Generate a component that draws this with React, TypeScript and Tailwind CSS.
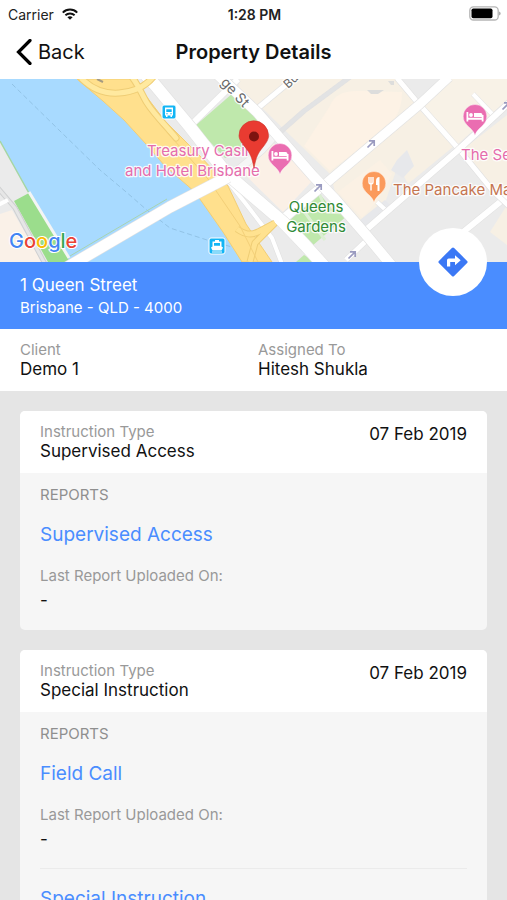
import type { ReactNode } from "react";

type Report = { name: string; lastUploaded: string };
type Instruction = { type: string; date: string; reports: Report[] };

const instructions: Instruction[] = [
  {
    type: "Supervised Access",
    date: "07 Feb 2019",
    reports: [{ name: "Supervised Access", lastUploaded: "-" }],
  },
  {
    type: "Special Instruction",
    date: "07 Feb 2019",
    reports: [
      { name: "Field Call", lastUploaded: "-" },
      { name: "Special Instruction", lastUploaded: "-" },
    ],
  },
];

function WifiIcon() {
  return (
    <svg className="h-3 w-4" viewBox="0 0 16 12" fill="none" stroke="#111" aria-hidden="true">
      <path d="M0.8 4.6C4.8 0.6 11.2 0.6 15.2 4.6" strokeWidth="2" />
      <path d="M3.4 7.3C6 4.8 10 4.8 12.6 7.3" strokeWidth="1.9" />
      <path d="M8 11.8L5.4 9.2C6.9 7.9 9.1 7.9 10.6 9.2Z" fill="#111" stroke="none" />
    </svg>
  );
}

function BatteryIcon() {
  return (
    <svg className="h-4 w-8" viewBox="0 0 32 16" aria-hidden="true">
      <rect x="0.8" y="0.8" width="28.4" height="13.2" rx="3.6" fill="#fff" stroke="#b5b5b5" strokeWidth="1.3" />
      <rect x="2.5" y="2.5" width="21" height="9.8" rx="1.8" fill="#000" />
      <path d="M30.3 5.5v4c1.6-.6 1.6-3.4 0-4z" fill="#8a8a8a" />
    </svg>
  );
}

function StatusBar() {
  return (
    <div className="grid h-7 grid-cols-3 items-center pl-2 pr-1.5 text-[14px] text-[#222]">
      <div className="flex items-center gap-2">
        <span>Carrier</span>
        <WifiIcon />
      </div>
      <span className="text-center font-semibold">1:28 PM</span>
      <div className="flex justify-end">
        <BatteryIcon />
      </div>
    </div>
  );
}

function NavBar() {
  return (
    <header className="grid h-[51px] grid-cols-[1fr_auto_1fr] items-center px-4 pb-1">
      <button type="button" className="flex items-center gap-1.5 justify-self-start text-[20px] text-[#111]">
        <svg className="h-[26px] w-4" viewBox="0 0 16 26" fill="none" stroke="#000" strokeWidth="3.2" aria-hidden="true">
          <path d="M14 1.5L2.500 13L14 24.500" strokeLinecap="round" strokeLinejoin="miter" />
        </svg>
        Back
      </button>
      <h1 className="text-[20px] font-semibold text-[#111]">Property Details</h1>
    </header>
  );
}

function Road({ d, width, color = "#fff" }: { d: string; width: number; color?: string }) {
  return (
    <g fill="none" strokeLinejoin="round">
      <path d={d} stroke="#e2e2e2" strokeWidth={width + 1.2} />
      <path d={d} stroke={color} strokeWidth={width} />
    </g>
  );
}

function PlacePin({ x, y, color, children }: { x: number; y: number; color: string; children: ReactNode }) {
  return (
    <g transform={`translate(${x} ${y})`}>
      <path
        d="M0 18.500C-1.500 13-5 11.500-8.500 7.500A11.800 11.800 0 1 1 8.500 7.500C5 11.500 1.500 13 0 18.500Z"
        fill={color}
        stroke="#fff"
        strokeOpacity="0.5"
        strokeWidth="0.8"
      />
      {children}
    </g>
  );
}

function Bed() {
  return (
    <g fill="#fff">
      <path d="M-8.500-5H-6.700V0.800H6.700V-2H8.500V4.500H6.700V2.800H-6.700V4.500H-8.500Z" />
      <circle cx="-4" cy="-2" r="1.900" />
      <path d="M-1-4H5.500Q7.500-4 7.500-2V0H-1Z" />
    </g>
  );
}

function Arrow({ x, y }: { x: number; y: number }) {
  return (
    <path
      transform={`translate(${x} ${y})`}
      d="M-3.500 3.500L2.500-2.500M-2-3.200H3.200V2"
      fill="none"
      stroke="#9a9bc0"
      strokeWidth="1.700"
    />
  );
}

function TransitStop({ x, y, ferry = false }: { x: number; y: number; ferry?: boolean }) {
  return (
    <g transform={`translate(${x} ${y})`}>
      {ferry ? (
        <>
          <rect x="-8" y="-8" width="16" height="16" rx="2" fill="#12b5f5" stroke="#fff" strokeWidth="1" />
          <path d="M-2-6H2V-4.500H4.500V0.500L6 1.500L4.500 4.500H-4.500L-6 1.500L-4.500 0.500V-4.500H-2ZM-3-3V-0.300H3V-3ZM-5 5.500H5V6.500H-5Z" fill="#fff" fillRule="evenodd" />
        </>
      ) : (
        <>
          <rect x="-7" y="-7" width="14" height="14" rx="2" fill="#12b5f5" stroke="#fff" strokeWidth="1" />
          <path d="M-4-4.500H4V3.500H3V5H1.500V3.500H-1.500V5H-3V3.500H-4ZM-2.700-2.800V0H2.700V-2.800ZM-2.700 1.200V2.300H-1.300V1.200ZM1.300 1.200V2.300H2.700V1.200Z" fill="#fff" fillRule="evenodd" />
        </>
      )}
    </g>
  );
}

function PropertyMap() {
  return (
    <svg
      className="block h-[183px] w-full font-[Inter,sans-serif]"
      viewBox="0 79 507 183"
      preserveAspectRatio="xMidYMid slice"
      role="img"
      aria-label="Map of 1 Queen Street, Brisbane"
    >
      <rect x="0" y="79" width="507" height="183" fill="#ebebeb" />

      {/* City blocks */}
      <g fill="#f7f0e4">
        <path d="M240 79H290L258 106L238 88Z" />
        <path d="M298 79H400L418 103L330 174L262 108Z" />
        <path d="M452 79H507V100L457 145L422 105Z" fill="#f8f2e7" />
        <path d="M418 108L453 147L408 184L398 165L386 200L364 228L335 192L332 180Z" />
        <path d="M272 142L313 180L283 212L238 168Z" fill="#fbf0e6" />
        <path d="M461 151L507 115V200L490 188Z" />
        <path d="M507 205V245L490 232Z" />
        <path d="M0 214L12 210L42 262H0Z" fill="#faf1e8" />
      </g>
      <g fill="#fdf2e5">
        <path d="M330 106Q335 90 360 91L402 92Q402 108 395 118L355 152L330 171L304 146Z" />
        <path d="M338 192L380 160L392 174L378 200L362 218Z" opacity="0.6" />
      </g>
      <g fill="#dddddc">
        <path d="M367 90H384L378 94H371Z" />
        <path d="M388 81H394V85H391Z" />
      </g>
      <g fill="#e7e8eb">
        <path d="M397 160L407 150L414 166L403 178L391 170Z" />
        <path d="M360 220L385 200L394 209L366 232Z" />
      </g>

      {/* Parks */}
      <g fill="#bfe8ac">
        <path d="M195 126L233 93L262 122L240 152L225 158Z" />
        <path d="M288 222L319 193L332 209L348 215L312 246Z" />
        <path d="M296 262L304 255L316 262Z" />
      </g>
      <path d="M303 210L325 240M319 193L327 212L345 213" fill="none" stroke="#dcefd3" strokeWidth="3" />

      {/* River */}
      <path
        d="M0 79H78L103 101L124 120L146 144L165 166L195 192L210 212L223 231L245 262H66L30 195L0 141Z"
        fill="#a8daff"
      />
      <path d="M12 84L60 131L100 170L125 191L148 211L170 228L207 240L232 247" fill="none" stroke="#8fc0e2" strokeWidth="0.900" strokeDasharray="5 3" />
      <path d="M0 141L30 195L68 259" fill="none" stroke="#a6d6a3" strokeWidth="1.500" />
      <path d="M14 201L29 193L67 255L69 262H48Z" fill="#9bdd8c" />
      <path d="M29 192L69 258" fill="none" stroke="#f4f5f4" strokeWidth="3" />
      <path d="M-2 188L15 208L45 264" fill="none" stroke="#cfd0d1" strokeWidth="5" />
      <path d="M-2 188L15 208L45 264" fill="none" stroke="#e6e6e6" strokeWidth="3" />
      <path d="M-2 205L8 200" stroke="#fff" strokeWidth="4" />

      {/* Local streets */}
      <Road d="M354 74L304 111L270 141" width={4} color="#e2e3e4" />
      <Road d="M190 126L238 79" width={6} />
      <Road d="M258 108L294 78" width={5} />
      <Road d="M228 178L262 150L273 138" width={7} color="#f5f5f5" />
      <Road d="M227 180L246 204L272 238L282 264" width={4} />
      <Road d="M346 260L367 240" width={5} />
      <Road d="M377 202L389 213" width={4} />
      <Road d="M473 94L494 116" width={4} />
      <Road d="M510 194L462 233" width={6} />
      <Road d="M397 78L418 103L457 147L493 191L510 207" width={5} />
      <Road d="M360 235L405 196L457 151L510 102" width={6} />
      <Road d="M283 219L330 180L420 104L449 77" width={9} />
      <Road d="M217 74L257 112L313 176L335 199L367 236L392 266" width={10} />
      <Road d="M145 74L155 85L190 127L227 174L283 222L305 245L324 266" width={12} />

      {/* Motorway */}
      <path
        d="M77 79H134L146 96L165 121L200 156L228 186L246 224L272 262H242L223 232L195 192L165 166L146 144L124 120L103 101Z"
        fill="#ffe08d"
        stroke="#f3ce73"
        strokeWidth="1"
      />
      <g fill="none" strokeLinecap="round" strokeLinejoin="round">
        <path d="M82 79C92 89 105 94 119 93C135 92 146 86 154 76M132 77C139 86 142 95 147 103C153 113 166 126 176 138" stroke="#efcd75" strokeWidth="7" />
        <path d="M82 79C92 89 105 94 119 93C135 92 146 86 154 76M132 77C139 86 142 95 147 103C153 113 166 126 176 138" stroke="#ffe99f" strokeWidth="5" />
        <path d="M275 223L258 232C250 236 244 234 237 229M275 223L255 243L250 262" stroke="#efcd75" strokeWidth="7" strokeLinecap="butt" />
        <path d="M275 223L258 232C250 236 244 234 237 229M275 223L255 243L250 262" stroke="#ffe290" strokeWidth="5" strokeLinecap="butt" />
        <path d="M160 124L208 179L240 226L258 262" stroke="#f3cf78" strokeWidth="1" />
      </g>
      <path d="M97 79L103 82" stroke="#a59a80" strokeWidth="2" />

      {/* Victoria Bridge */}
      <Road d="M66 268L170 207L228 177" width={11} />
      <path d="M70 256L167 199" fill="none" stroke="#a8d3b1" strokeWidth="1" />

      <Arrow x={371} y={144} />
      <Arrow x={318} y={188} />
      <Arrow x={352} y={255} />
      <Arrow x={506} y={106} />

      <TransitStop x={169} y={112} />
      <TransitStop x={217} y={246} ferry />

      {/* Labels */}
      <g stroke="#fff" strokeWidth="2.500" paintOrder="stroke" strokeLinejoin="round" fontSize="15" strokeOpacity="0.85">
        <g fill="#686868">
          <text transform="translate(220 83) rotate(47)" fontSize="14">ge St</text>
          <text transform="translate(288 89) rotate(-42)" fontSize="12">Bu</text>
        </g>
        <g fill="#e56cac">
          <text x="147" y="156">Treasury Casin</text>
          <text x="125" y="176">and Hotel Brisbane</text>
          <text x="461" y="160">The Se</text>
        </g>
        <text x="393" y="195" fill="#c57550">The Pancake Ma</text>
        <g fill="#2f8a35" textAnchor="middle">
          <text x="316" y="212">Queens</text>
          <text x="316" y="232">Gardens</text>
        </g>
      </g>

      <PlacePin x={280} y={156} color="#ea6db1">
        <Bed />
      </PlacePin>
      <PlacePin x={475} y={117} color="#ea6db1">
        <Bed />
      </PlacePin>
      <PlacePin x={374} y={184} color="#fb9a5b">
        <path d="M-5-7V-2Q-5 0-3 0Q-1 0-1-2V-7M-3-7V6.500" fill="none" stroke="#fff" strokeWidth="1.400" />
        <path d="M5.500-7V7H3.500V1H2V-3Q2-7 5.500-7Z" fill="#fff" />
      </PlacePin>

      {/* Property marker */}
      <path d="M254 168C252 157 250 153 245 147C241 142 239 139 239 135.500A14.600 14.600 0 0 1 268.500 135.500C268.500 139 267 142 263 147C258 153 256 157 254 168Z" fill="#e93b31" stroke="#cf3730" strokeWidth="0.600" />
      <circle cx="254" cy="136.500" r="5" fill="#7d1310" />

      <text x="9" y="248" fontSize="20" fontWeight="500" stroke="#fff" strokeWidth="2" paintOrder="stroke">
        <tspan fill="#4384f3">G</tspan>
        <tspan fill="#e94336">o</tspan>
        <tspan fill="#fbbc05">o</tspan>
        <tspan fill="#4384f3">g</tspan>
        <tspan fill="#34a853">l</tspan>
        <tspan fill="#e94336">e</tspan>
      </text>
    </svg>
  );
}

function AddressBanner() {
  return (
    <section className="relative flex h-[67px] flex-col justify-center bg-[#4a8dff] px-5 text-white">
      <p className="text-[17px] leading-6">1 Queen Street</p>
      <p className="text-[15px] leading-[22px]">Brisbane - QLD - 4000</p>
      <button
        type="button"
        aria-label="Get directions"
        className="absolute -top-[34px] right-5 flex size-[68px] items-center justify-center rounded-full bg-white"
      >
        <svg className="size-[30px]" viewBox="0 0 30 30" aria-hidden="true">
          <path d="M13.900.9a1.600 1.600 0 0 1 2.200 0l13 13a1.600 1.600 0 0 1 0 2.200l-13 13a1.600 1.600 0 0 1-2.200 0l-13-13a1.600 1.600 0 0 1 0-2.200z" fill="#3b78f5" />
          <path d="M9 19.500v-6.300q0-1.700 1.700-1.700H17V8.300l5.700 5-5.700 5V15h-4.800v4.500z" fill="#fff" />
        </svg>
      </button>
    </section>
  );
}

function Field({ label, value }: { label: string; value: string }) {
  return (
    <div>
      <p className="text-[15px] leading-[18px] text-[#999]">{label}</p>
      <p className="text-[17px] leading-5 text-[#111]">{value}</p>
    </div>
  );
}

function InstructionCard({ instruction }: { instruction: Instruction }) {
  return (
    <article className="overflow-hidden rounded-[5px] bg-[#f6f6f6]">
      <div className="flex items-start justify-between bg-white px-5 py-3">
        <Field label="Instruction Type" value={instruction.type} />
        <p className="text-[17px] leading-[22px] text-[#111]">{instruction.date}</p>
      </div>
      <div className="px-5 pt-3">
        <h2 className="text-[15px] leading-5 text-[#8f8f8f]">REPORTS</h2>
        {instruction.reports.map((report) => (
          <div key={report.name} className="border-b border-[#ebebeb] pb-[18px] pt-[18px] last:border-[#f6f6f6]">
            <a href="#report" className="block text-[19px] leading-6 text-[#4a8dff]">
              {report.name}
            </a>
            <p className="pt-5 text-[15px] leading-[18px] text-[#999]">Last Report Uploaded On:</p>
            <p className="pt-1 text-[17px] leading-[22px] text-[#111]">{report.lastUploaded}</p>
          </div>
        ))}
      </div>
    </article>
  );
}

export default function App() {
  return (
    <div className="h-screen overflow-hidden bg-[#e5e5e5] font-[Inter,'Liberation_Sans',sans-serif]">
      <div className="bg-white">
        <StatusBar />
        <NavBar />
      </div>
      <main>
        <PropertyMap />
        <AddressBanner />
        <section className="grid grid-cols-[238px_1fr] bg-white px-5 py-3">
          <Field label="Client" value="Demo 1" />
          <Field label="Assigned To" value="Hitesh Shukla" />
        </section>
        <div className="flex flex-col gap-5 p-5">
          {instructions.map((instruction) => (
            <InstructionCard key={instruction.type} instruction={instruction} />
          ))}
        </div>
      </main>
    </div>
  );
}
